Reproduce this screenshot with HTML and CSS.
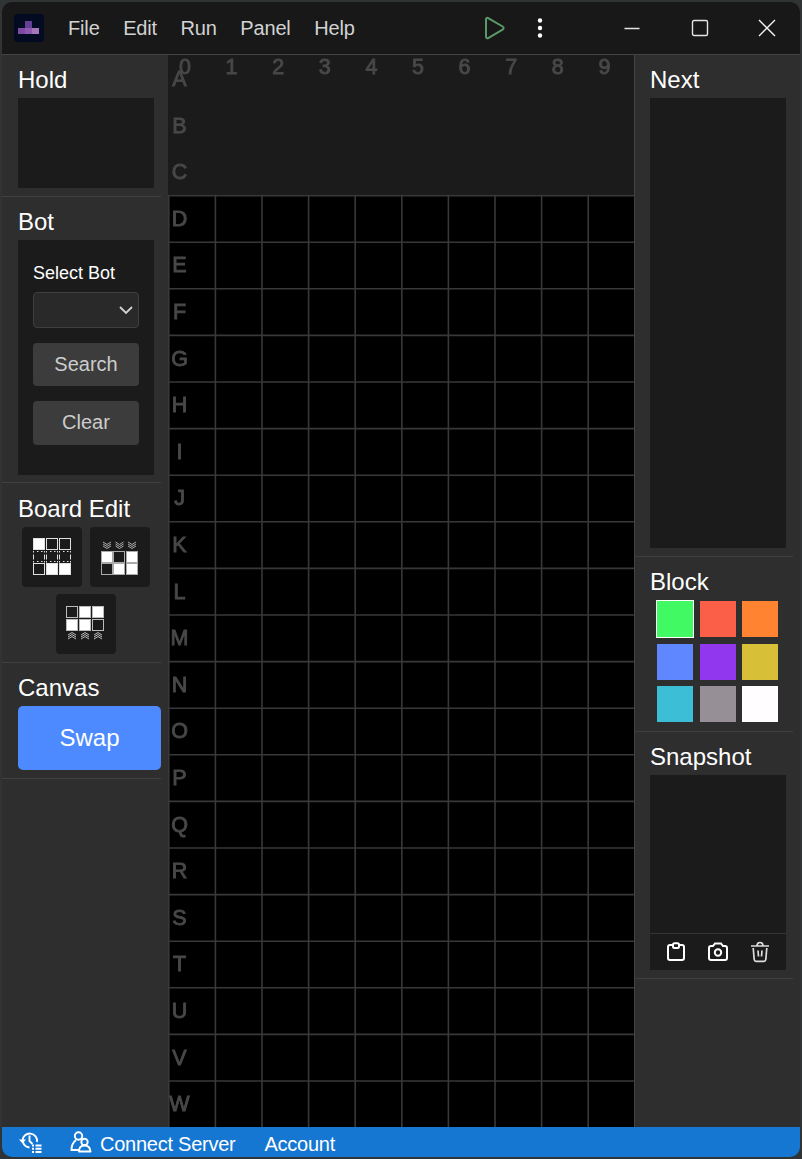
FILE: index.html
```html
<!DOCTYPE html>
<html lang="en">
<head>
    <meta charset="UTF-8">
    <meta name="viewport" content="width=device-width, initial-scale=1.0">
    <title>Board</title>
    <link rel="stylesheet" href="styles.css">
</head>
<body>
    <div class="window">

        <!-- Title Bar -->
        <header class="title-bar">
            <svg class="logo" width="30" height="28" viewBox="0 0 30 28">
                <rect width="30" height="28" rx="3" fill="#030b22"/>
                <rect x="11" y="7" width="7" height="7" fill="#653e95"/>
                <rect x="4" y="14" width="7" height="6" fill="#7d49a3"/>
                <rect x="11" y="14" width="7" height="6" fill="#8f58b0"/>
                <rect x="18" y="14" width="7" height="6" fill="#a477b9"/>
            </svg>
            <nav class="menu">
                <a>File</a>
                <a>Edit</a>
                <a>Run</a>
                <a>Panel</a>
                <a>Help</a>
            </nav>
            <div class="run-tools">
                <svg width="24" height="26" viewBox="0 0 24 26">
                    <path d="M3 4.500v17c0 1.600 1.200 2.200 2.600 1.400l14-8.200c1.300-.8 1.300-2.400 0-3.200l-14-8.200C4.200 2.400 3 3 3 4.500z" fill="none" stroke="#5a9a68" stroke-width="2"/>
                </svg>
                <svg width="8" height="22" viewBox="0 0 8 22" fill="#fff">
                    <circle cx="4" cy="3.500" r="2.200"/>
                    <circle cx="4" cy="11" r="2.200"/>
                    <circle cx="4" cy="18.500" r="2.200"/>
                </svg>
            </div>
            <div class="window-buttons">
                <svg width="18" height="18" viewBox="0 0 18 18"><path d="M1.500 9.500h15" stroke="#e4e4e4" stroke-width="1.400"/></svg>
                <svg width="18" height="18" viewBox="0 0 18 18"><rect x="1.500" y="1.500" width="15" height="15" rx="1.500" fill="none" stroke="#e4e4e4" stroke-width="1.400"/></svg>
                <svg width="18" height="18" viewBox="0 0 18 18"><path d="M1 1l16 16M17 1L1 17" stroke="#f4f4f4" stroke-width="1.400"/></svg>
            </div>
        </header>

        <main class="content">

            <!-- Left Sidebar -->
            <aside class="sidebar">
                <section class="panel">
                    <h2>Hold</h2>
                    <div class="box hold-box"></div>
                </section>

                <section class="panel bot-panel">
                    <h2>Bot</h2>
                    <div class="box bot-box">
                        <label>Select Bot</label>
                        <div class="select">
                            <svg width="14" height="10" viewBox="0 0 14 10"><path d="M1 2l6 6 6-6" fill="none" stroke="#d0d0d0" stroke-width="1.900"/></svg>
                        </div>
                        <button>Search</button>
                        <button class="clear">Clear</button>
                    </div>
                </section>

                <section class="panel edit-panel">
                    <h2>Board Edit</h2>
                    <div class="edit-tools">
                        <button>
                            <svg width="40" height="40" viewBox="0 0 40 40">
                                <g fill="none" stroke="#e0e0e0">
                                    <rect x="1.500" y="1.500" width="11" height="11" fill="#fff"/>
                                    <rect x="14.500" y="1.500" width="11" height="11"/>
                                    <rect x="27.500" y="1.500" width="11" height="11"/>
                                    <path d="M1.500 14v1.500M1.500 17.500v5M1.500 24v1.500M12.500 14v1.500M12.500 17.500v5M12.500 24v1.500M14.500 14v1.500M14.500 17.500v5M14.500 24v1.500M25.500 14v1.500M25.500 17.500v5M25.500 24v1.500M27.500 14v1.500M27.500 17.500v5M27.500 24v1.500M38.500 14v1.500M38.500 17.500v5M38.500 24v1.500"/>
                                    <path d="M5 14.500h1.500M9 14.500h1.500M18 14.500h1.500M22 14.500h1.500M31 14.500h1.500M35 14.500h1.500M5 24.500h1.500M9 24.500h1.500M18 24.500h1.500M22 24.500h1.500M31 24.500h1.500M35 24.500h1.500"/>
                                    <rect x="1.500" y="26.500" width="11" height="11"/>
                                    <rect x="14.500" y="26.500" width="11" height="11" fill="#fff"/>
                                    <rect x="27.500" y="26.500" width="11" height="11" fill="#fff"/>
                                </g>
                            </svg>
                        </button>
                        <button>
                            <svg width="40" height="40" viewBox="0 0 40 40">
                                <g fill="none" stroke="#aaa">
                                    <path d="M3 5l4 2.500 4-2.500M3 7l4 2.500 4-2.500M3 9l4 2.500 4-2.500M15.500 5l4 2.500 4-2.500M15.500 7l4 2.500 4-2.500M15.500 9l4 2.500 4-2.500M28 5l4 2.500 4-2.500M28 7l4 2.500 4-2.500M28 9l4 2.500 4-2.500"/>
                                    <rect x="1.500" y="14.500" width="11" height="11" fill="#fff"/>
                                    <rect x="13.500" y="14.500" width="11" height="11"/>
                                    <rect x="26.500" y="14.500" width="11" height="11" fill="#fff"/>
                                    <rect x="1.500" y="26.500" width="11" height="11"/>
                                    <rect x="13.500" y="26.500" width="11" height="11" fill="#fff"/>
                                    <rect x="26.500" y="26.500" width="11" height="11" fill="#fff"/>
                                </g>
                            </svg>
                        </button>
                        <button>
                            <svg width="40" height="40" viewBox="0 0 40 40">
                                <g fill="none" stroke="#bbb">
                                    <rect x="0.500" y="2.500" width="11" height="11"/>
                                    <rect x="13.500" y="2.500" width="11" height="11" fill="#fff"/>
                                    <rect x="26.500" y="2.500" width="11" height="11" fill="#fff"/>
                                    <rect x="0.500" y="15.500" width="11" height="11" fill="#fff"/>
                                    <rect x="13.500" y="15.500" width="11" height="11" fill="#fff"/>
                                    <rect x="26.500" y="15.500" width="11" height="11"/>
                                    <path d="M2 31l4-2.500 4 2.500M2 33l4-2.500 4 2.500M2 35l4-2.500 4 2.500M15 31l4-2.500 4 2.500M15 33l4-2.500 4 2.500M15 35l4-2.500 4 2.500M28 31l4-2.500 4 2.500M28 33l4-2.500 4 2.500M28 35l4-2.500 4 2.500"/>
                                </g>
                            </svg>
                        </button>
                    </div>
                </section>

                <section class="panel">
                    <h2>Canvas</h2>
                    <button class="swap">Swap</button>
                </section>
            </aside>

            <!-- Board, filled in by board.js -->
            <svg class="board" id="board" width="466" height="1072" viewBox="0 0 466 1072"></svg>

            <!-- Right Sidebar -->
            <aside class="sidebar sidebar-right">
                <section class="panel">
                    <h2>Next</h2>
                    <div class="box next-box"></div>
                </section>

                <section class="panel">
                    <h2>Block</h2>
                    <div class="blocks">
                        <div class="block green selected"></div>
                        <div class="block red"></div>
                        <div class="block orange"></div>
                        <div class="block blue"></div>
                        <div class="block purple"></div>
                        <div class="block yellow"></div>
                        <div class="block cyan"></div>
                        <div class="block gray"></div>
                        <div class="block white"></div>
                    </div>
                </section>

                <section class="panel">
                    <h2>Snapshot</h2>
                    <div class="box snapshot-box">
                        <div class="snapshot-tools">
                            <svg width="20" height="20" viewBox="0 0 20 20" fill="none" stroke="#fff" stroke-width="2">
                                <path d="M7 3H4Q2 3 2 5v11q0 2 2 2h12q2 0 2-2V5q0-2-2-2h-3"/>
                                <rect x="7" y="1.200" width="6" height="4.800" rx="1.500"/>
                            </svg>
                            <svg width="22" height="20" viewBox="0 0 22 20" fill="none" stroke="#fff" stroke-width="2">
                                <path d="M4 4h2l2-2.500h6L16 4h2q2 0 2 2v10q0 2-2 2H4q-2 0-2-2V6q0-2 2-2z"/>
                                <circle cx="11" cy="10.500" r="3.200"/>
                            </svg>
                            <svg width="20" height="22" viewBox="0 0 20 22" fill="none" stroke="#ddd" stroke-width="1.700">
                                <path d="M1 5h18M7 5Q7 1.500 10 1.500T13 5M3.200 7l1 11.500q.2 1.800 2 1.800h7.600q1.800 0 2-1.800l1-11.500M8 9.500l.5 6M12 9.500l-.5 6"/>
                            </svg>
                        </div>
                    </div>
                </section>
            </aside>
        </main>

        <!-- Status Bar -->
        <footer class="status-bar">
            <svg class="history" width="24" height="24" viewBox="0 0 24 24" fill="none" stroke="#fff" stroke-width="1.900">
                <path d="M3.500 10.500a7.300 7.300 0 1 1 14.500 1.500M4 12a7.500 7.500 0 0 0 6.500 5.500M10.500 5.500v5.500l3 3"/>
                <path d="M0 9.500h7L3.500 13.500z" fill="#fff" stroke="none"/>
                <path d="M13 15.500h2m1.500 0h6M13 18.800h2m1.500 0h6M13 22h2m1.500 0h6"/>
            </svg>
            <svg class="users" width="22" height="23" viewBox="0 0 22 23" fill="none" stroke="#fff" stroke-width="1.900">
                <circle cx="8.500" cy="5" r="3.700"/>
                <path d="M9 19H1.500q0-6.500 4.500-10"/>
                <circle cx="14.500" cy="11" r="3.200"/>
                <path d="M9 20.500q0-6 5.500-6t6 6z" stroke-linejoin="round"/>
            </svg>
            <span class="connect">Connect Server</span>
            <span>Account</span>
        </footer>
    </div>

    <script src="board.js"></script>
</body>
</html>
```
FILE: board.js
```js
const board = document.getElementById('board');
const CELL = 46.6;
const COLS = 10;
const ROWS = 23;
const HIDDEN_ROWS = 3;

function add(name, attrs, text) {
    const el = document.createElementNS('http://www.w3.org/2000/svg', name);
    for (const key in attrs) {
        el.setAttribute(key, attrs[key]);
    }
    if (text) {
        el.textContent = text;
    }
    board.appendChild(el);
}

const top0 = HIDDEN_ROWS * CELL;
add('rect', { x: 0, y: top0, width: 466, height: 1072 - top0, class: 'field' });

// Grid lines
for (let c = 0; c <= COLS; c++) {
    const x = c * CELL + 0.8;
    add('line', { x1: x, y1: top0, x2: x, y2: 1072, class: 'line' });
}
for (let r = HIDDEN_ROWS; r < ROWS; r++) {
    const y = r * CELL + 0.8;
    add('line', { x1: 0, y1: y, x2: 466, y2: y, class: 'line' });
}

// Labels
for (let c = 0; c < COLS; c++) {
    add('text', { x: c * CELL + 17, y: 19, class: 'label' }, String(c));
}
for (let r = 0; r < ROWS; r++) {
    add('text', { x: 11.5, y: r * CELL + 31, class: 'label' }, String.fromCharCode(65 + r));
}
```
FILE: styles.css
```css
* {
    box-sizing: border-box;
}

body {
    margin: 0;
    padding: 2px;
    height: 1159px;
    background-color: #303435;
    font-family: "Liberation Sans", Arial, sans-serif;
    color: white;
    overflow: hidden;
}

button {
    font-family: inherit;
    border: none;
    padding: 0;
}

svg {
    display: block;
    flex-shrink: 0;
}

.window {
    width: 798px;
    height: 1155px;
    display: flex;
    flex-direction: column;
    border-radius: 10px;
    overflow: hidden;
    background-color: #2e2e2e;
}

/* Title Bar */
.title-bar {
    height: 53px;
    background-color: #181818;
    border-bottom: 1px solid #434343;
    display: flex;
    align-items: center;
    padding-left: 12px;
}

.menu {
    display: flex;
    gap: 23.5px;
    margin-left: 24px;
    width: 415px;
    font-size: 20px;
    letter-spacing: -0.15px;
    color: #d2d2d2;
}

.run-tools {
    display: flex;
    align-items: center;
    gap: 29px;
    width: 159px;
}

.window-buttons {
    display: flex;
    gap: 49.5px;
    margin-left: -19px;
}

/* Content */
.content {
    height: 1072px;
    display: flex;
}

/* Sidebars */
.sidebar {
    width: 166px;
    padding-right: 7px;
    background-color: #2e2e2e;
}

.sidebar-right {
    border-left: 1px solid #434343;
}

.panel {
    padding: 0 0 8px 16px;
    border-bottom: 1px solid #3f3f3f;
}

.sidebar-right .panel {
    padding-left: 15px;
}

.bot-panel {
    padding-bottom: 7px;
}

.panel h2 {
    margin: 0;
    height: 43px;
    padding-top: 11px;
    font-size: 24px;
    line-height: 28px;
    font-weight: normal;
}

.edit-panel h2 {
    padding-top: 12px;
}

.box {
    width: 136px;
    background-color: #1b1b1b;
}

.hold-box {
    height: 90px;
}

.next-box {
    height: 450px;
}

/* Bot */
.bot-box {
    height: 235px;
    padding: 22px 15px;
    display: flex;
    flex-direction: column;
}

.bot-box label {
    font-size: 18px;
    line-height: 22px;
}

.select {
    height: 36px;
    margin-top: 8px;
    border: 1px solid #3e3e3e;
    border-radius: 4px;
    background-color: #292929;
    display: flex;
    align-items: center;
    justify-content: flex-end;
    padding-right: 5px;
}

.bot-box button {
    height: 43px;
    margin-top: 15px;
    border-radius: 4px;
    background-color: #3c3c3c;
    color: #ccc;
    font-size: 20px;
}

.bot-box .clear {
    height: 44px;
    padding-bottom: 2px;
}

/* Board Edit */
.edit-tools {
    width: 136px;
    padding-top: 1px;
    display: flex;
    flex-wrap: wrap;
    justify-content: center;
    gap: 7px 8px;
}

.edit-tools button {
    width: 60px;
    height: 60px;
    border-radius: 4px;
    background-color: #1b1b1b;
    display: flex;
    align-items: center;
    justify-content: center;
}

.swap {
    display: block;
    width: 143px;
    height: 64px;
    border-radius: 5px;
    background-color: #4d8aff;
    color: white;
    font-size: 24px;
}

/* Board */
.board {
    background-color: #1b1b1b;
}

.field {
    fill: black;
}

.line {
    stroke: #383838;
    stroke-width: 1.6;
}

.label {
    fill: #484848;
    stroke: #484848;
    stroke-width: 0.9;
    font-size: 21.5px;
    text-anchor: middle;
    filter: blur(0.7px);
}

/* Blocks */
.blocks {
    height: 123px;
    padding: 1px 0 0 7px;
    display: grid;
    grid-template-columns: repeat(3, 36px);
    grid-auto-rows: 36px;
    gap: 6.5px;
}

.selected {
    outline: 1px solid white;
}

.green { background-color: #40f963; }
.red { background-color: #fc5f48; }
.orange { background-color: #ff8330; }
.blue { background-color: #5f87ff; }
.purple { background-color: #9138ef; }
.yellow { background-color: #d7bf38; }
.cyan { background-color: #3cbfd6; }
.gray { background-color: #968f95; }
.white { background-color: #fffdff; }

/* Snapshot */
.snapshot-box {
    height: 195px;
    display: flex;
    flex-direction: column;
    justify-content: flex-end;
}

.snapshot-tools {
    height: 37px;
    border-top: 1px solid #343434;
    display: flex;
    align-items: center;
    justify-content: space-between;
    padding: 0 16px;
}

/* Status Bar */
.status-bar {
    height: 30px;
    background-color: #1677d2;
    display: flex;
    align-items: center;
    padding-left: 17px;
    font-size: 20px;
    letter-spacing: -0.25px;
    line-height: 30px;
}

.users {
    margin-left: 27px;
    margin-right: 8px;
}

.connect {
    margin-right: 29px;
}

.status-bar span {
    padding-top: 4px;
}
```
